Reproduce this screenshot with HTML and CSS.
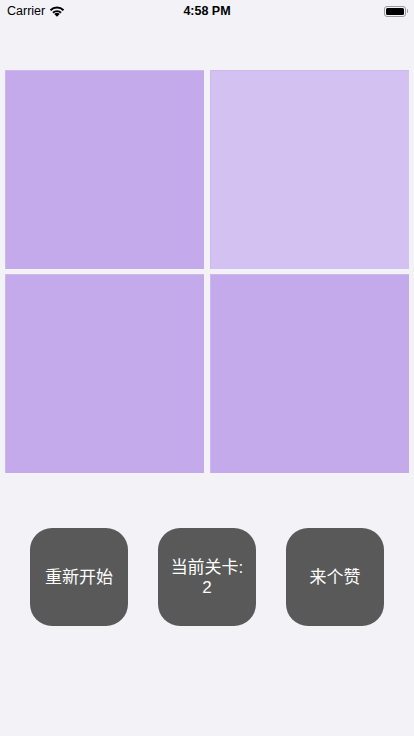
FILE: index.html
```html
<!DOCTYPE html>
<html>
<head>
<meta charset="utf-8">
<link rel="stylesheet" href="styles.css">
</head>
<body>
<div class="status">
  <div class="carrier">Carrier
    <svg class="wifi" width="16" height="12" viewBox="0 0 16 12">
      <path d="M8 11.8 L5.3 9.1 A3.8 3.8 0 0 1 10.7 9.1 Z" fill="#000"/>
      <path d="M3.3 7.1 A6.6 6.6 0 0 1 12.7 7.1 L11.3 8.5 A4.6 4.6 0 0 0 4.7 8.5 Z" fill="#000"/>
      <path d="M0.8 4.6 A10.2 10.2 0 0 1 15.2 4.6 L13.8 6 A8.2 8.2 0 0 0 2.2 6 Z" fill="#000"/>
    </svg>
  </div>
  <div class="time">4:58 PM</div>
  <div class="battery"><div class="cell"><div class="fill"></div></div><div class="nub"></div></div>
</div>
<div class="board">
  <div class="tile"></div>
  <div class="tile light"></div>
  <div class="tile"></div>
  <div class="tile"></div>
</div>
<div class="buttons">
  <div class="btn">重新开始</div>
  <div class="btn">当前关卡:<br>2</div>
  <div class="btn">来个赞</div>
</div>
</body>
</html>
```
FILE: styles.css
```css
html, body {
  margin: 0;
  padding: 0;
  background: #f2f2f7;
  width: 414px;
  height: 736px;
  overflow: hidden;
  font-family: "Liberation Sans", "Noto Sans CJK SC", sans-serif;
}
.status {
  height: 22px;
  display: flex;
  align-items: center;
  justify-content: space-between;
  padding: 0 6px 0 7px;
  position: relative;
}
.carrier {
  font-size: 12.5px;
  color: #000;
  display: flex;
  align-items: center;
  gap: 4px;
}
.time {
  position: absolute;
  left: 0;
  right: 0;
  text-align: center;
  font-size: 12.5px;
  font-weight: 700;
}
.battery {
  display: flex;
  align-items: center;
  gap: 1px;
}
.cell {
  width: 22px;
  height: 11px;
  border: 1px solid #9a9a9a;
  border-radius: 3px;
  padding: 1px;
  box-sizing: border-box;
}
.fill {
  width: 100%;
  height: 100%;
  background: #000;
  border-radius: 1.5px;
}
.nub {
  width: 1.5px;
  height: 4px;
  background: #9a9a9a;
  border-radius: 0 1px 1px 0;
}
.board {
  margin: 48px 0 0 5px;
  display: grid;
  grid-template-columns: 199px 199px;
  grid-template-rows: 199px 199px;
  column-gap: 6px;
  row-gap: 5px;
}
.tile {
  background: #c4aaeb;
  box-shadow: inset 1px 1px 0 #cdb7ef;
}
.tile.light {
  background: #d3c1f1;
}
.buttons {
  margin-top: 55px;
  display: flex;
  justify-content: center;
  gap: 30px;
}
.btn {
  width: 98px;
  height: 98px;
  border-radius: 22px;
  background: #595959;
  color: #fff;
  font-size: 17px;
  line-height: 20px;
  padding-top: 2px;
  box-sizing: border-box;
  display: flex;
  align-items: center;
  justify-content: center;
  text-align: center;
  font-family: "Liberation Sans", "Noto Sans CJK SC", sans-serif;
}
```
